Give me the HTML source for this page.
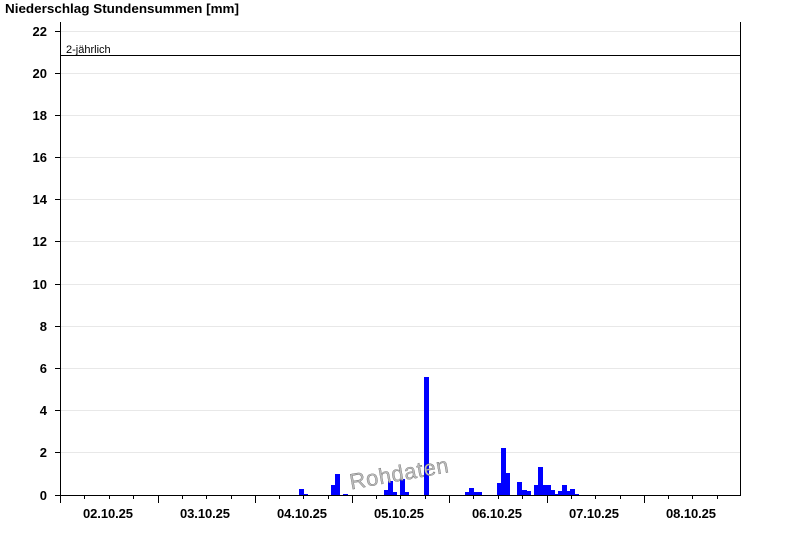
<!DOCTYPE html>
<html><head><meta charset="utf-8"><style>
html,body{margin:0;padding:0;background:#fff;}
svg{display:block;font-family:"Liberation Sans",Arial,sans-serif;}
</style></head><body>
<svg width="800" height="550" viewBox="0 0 800 550" xmlns="http://www.w3.org/2000/svg">
<text x="5" y="13" font-size="12.5" font-weight="bold" fill="#000" textLength="234" lengthAdjust="spacingAndGlyphs">Niederschlag Stundensummen [mm]</text>
<g stroke="#e8e8e8" stroke-width="1">
<line x1="61" y1="31.5" x2="740" y2="31.5"/><line x1="61" y1="73.5" x2="740" y2="73.5"/>
<line x1="61" y1="115.5" x2="740" y2="115.5"/><line x1="61" y1="157.5" x2="740" y2="157.5"/>
<line x1="61" y1="199.5" x2="740" y2="199.5"/><line x1="61" y1="241.5" x2="740" y2="241.5"/>
<line x1="61" y1="284.5" x2="740" y2="284.5"/><line x1="61" y1="326.5" x2="740" y2="326.5"/>
<line x1="61" y1="368.5" x2="740" y2="368.5"/><line x1="61" y1="410.5" x2="740" y2="410.5"/>
<line x1="61" y1="452.5" x2="740" y2="452.5"/>
</g>
<g fill="#0000ff">
<rect x="299" y="489" width="5" height="6"/><rect x="304" y="494" width="4" height="1"/>
<rect x="331" y="485" width="4" height="10"/><rect x="335" y="474" width="5" height="21"/>
<rect x="343" y="494" width="5" height="1"/>
<rect x="384" y="490" width="4" height="5"/><rect x="388" y="481" width="5" height="14"/><rect x="393" y="492" width="4" height="3"/>
<rect x="400" y="479" width="5" height="16"/><rect x="405" y="492" width="4" height="3"/>
<rect x="424" y="377" width="5" height="118"/>
<rect x="465" y="492" width="4" height="3"/><rect x="469" y="488" width="5" height="7"/><rect x="474" y="492" width="8" height="3"/>
<rect x="497" y="483" width="4" height="12"/><rect x="501" y="448" width="5" height="47"/><rect x="506" y="473" width="4" height="22"/>
<rect x="517" y="482" width="5" height="13"/><rect x="522" y="490" width="5" height="5"/><rect x="527" y="491" width="4" height="4"/>
<rect x="534" y="485" width="4" height="10"/><rect x="538" y="467" width="5" height="28"/><rect x="543" y="485" width="8" height="10"/>
<rect x="551" y="490" width="4" height="5"/><rect x="555" y="494" width="3" height="1"/><rect x="558" y="491" width="4" height="4"/>
<rect x="562" y="485" width="5" height="10"/><rect x="567" y="491" width="3" height="4"/><rect x="570" y="489" width="5" height="6"/><rect x="575" y="494" width="4" height="1"/>
</g>
<text x="348" y="481" font-size="22" fill="#bbb" stroke="#555" stroke-width="0.3" textLength="100" transform="rotate(-10 398 468)">Rohdaten</text>
<g stroke="#000" stroke-width="1">
<line x1="60.5" y1="22" x2="60.5" y2="503"/>
<line x1="740.5" y1="22" x2="740.5" y2="495"/>
<line x1="60" y1="495.5" x2="741" y2="495.5"/>
<line x1="61" y1="55.5" x2="740" y2="55.5"/>
<line x1="55" y1="31.5" x2="60" y2="31.5"/><line x1="55" y1="73.5" x2="60" y2="73.5"/>
<line x1="55" y1="115.5" x2="60" y2="115.5"/><line x1="55" y1="157.5" x2="60" y2="157.5"/>
<line x1="55" y1="199.5" x2="60" y2="199.5"/><line x1="55" y1="241.5" x2="60" y2="241.5"/>
<line x1="55" y1="284.5" x2="60" y2="284.5"/><line x1="55" y1="326.5" x2="60" y2="326.5"/>
<line x1="55" y1="368.5" x2="60" y2="368.5"/><line x1="55" y1="410.5" x2="60" y2="410.5"/>
<line x1="55" y1="452.5" x2="60" y2="452.5"/><line x1="55" y1="495.5" x2="60" y2="495.5"/>
</g>
<g font-size="13" font-weight="bold" text-anchor="end" fill="#000">
<text x="47" y="36">22</text><text x="47" y="78">20</text><text x="47" y="120">18</text>
<text x="47" y="162">16</text><text x="47" y="204">14</text><text x="47" y="246">12</text>
<text x="47" y="289">10</text><text x="47" y="331">8</text><text x="47" y="373">6</text>
<text x="47" y="415">4</text><text x="47" y="457">2</text><text x="47" y="500">0</text>
</g>
<text x="66" y="53" font-size="11" fill="#000">2-jährlich</text>
<g font-size="13" font-weight="bold" fill="#000" lengthAdjust="spacingAndGlyphs">
<text x="83" y="518" textLength="50">02.10.25</text><text x="180" y="518" textLength="50">03.10.25</text>
<text x="277" y="518" textLength="50">04.10.25</text><text x="374" y="518" textLength="50">05.10.25</text>
<text x="472" y="518" textLength="50">06.10.25</text><text x="569" y="518" textLength="50">07.10.25</text>
<text x="666" y="518" textLength="50">08.10.25</text>
</g>
<g stroke="#000" stroke-width="1">
<line x1="84.5" y1="495" x2="84.5" y2="499"/><line x1="109.5" y1="495" x2="109.5" y2="499"/><line x1="133.5" y1="495" x2="133.5" y2="499"/><line x1="158.5" y1="495" x2="158.5" y2="503"/>
<line x1="182.5" y1="495" x2="182.5" y2="499"/><line x1="206.5" y1="495" x2="206.5" y2="499"/><line x1="231.5" y1="495" x2="231.5" y2="499"/><line x1="255.5" y1="495" x2="255.5" y2="503"/>
<line x1="279.5" y1="495" x2="279.5" y2="499"/><line x1="303.5" y1="495" x2="303.5" y2="499"/><line x1="328.5" y1="495" x2="328.5" y2="499"/><line x1="352.5" y1="495" x2="352.5" y2="503"/>
<line x1="376.5" y1="495" x2="376.5" y2="499"/><line x1="400.5" y1="495" x2="400.5" y2="499"/><line x1="425.5" y1="495" x2="425.5" y2="499"/><line x1="449.5" y1="495" x2="449.5" y2="503"/>
<line x1="473.5" y1="495" x2="473.5" y2="499"/><line x1="498.5" y1="495" x2="498.5" y2="499"/><line x1="522.5" y1="495" x2="522.5" y2="499"/><line x1="547.5" y1="495" x2="547.5" y2="503"/>
<line x1="571.5" y1="495" x2="571.5" y2="499"/><line x1="595.5" y1="495" x2="595.5" y2="499"/><line x1="620.5" y1="495" x2="620.5" y2="499"/><line x1="644.5" y1="495" x2="644.5" y2="503"/>
<line x1="668.5" y1="495" x2="668.5" y2="499"/><line x1="692.5" y1="495" x2="692.5" y2="499"/><line x1="717.5" y1="495" x2="717.5" y2="499"/>
</g>
</svg>
</body></html>
